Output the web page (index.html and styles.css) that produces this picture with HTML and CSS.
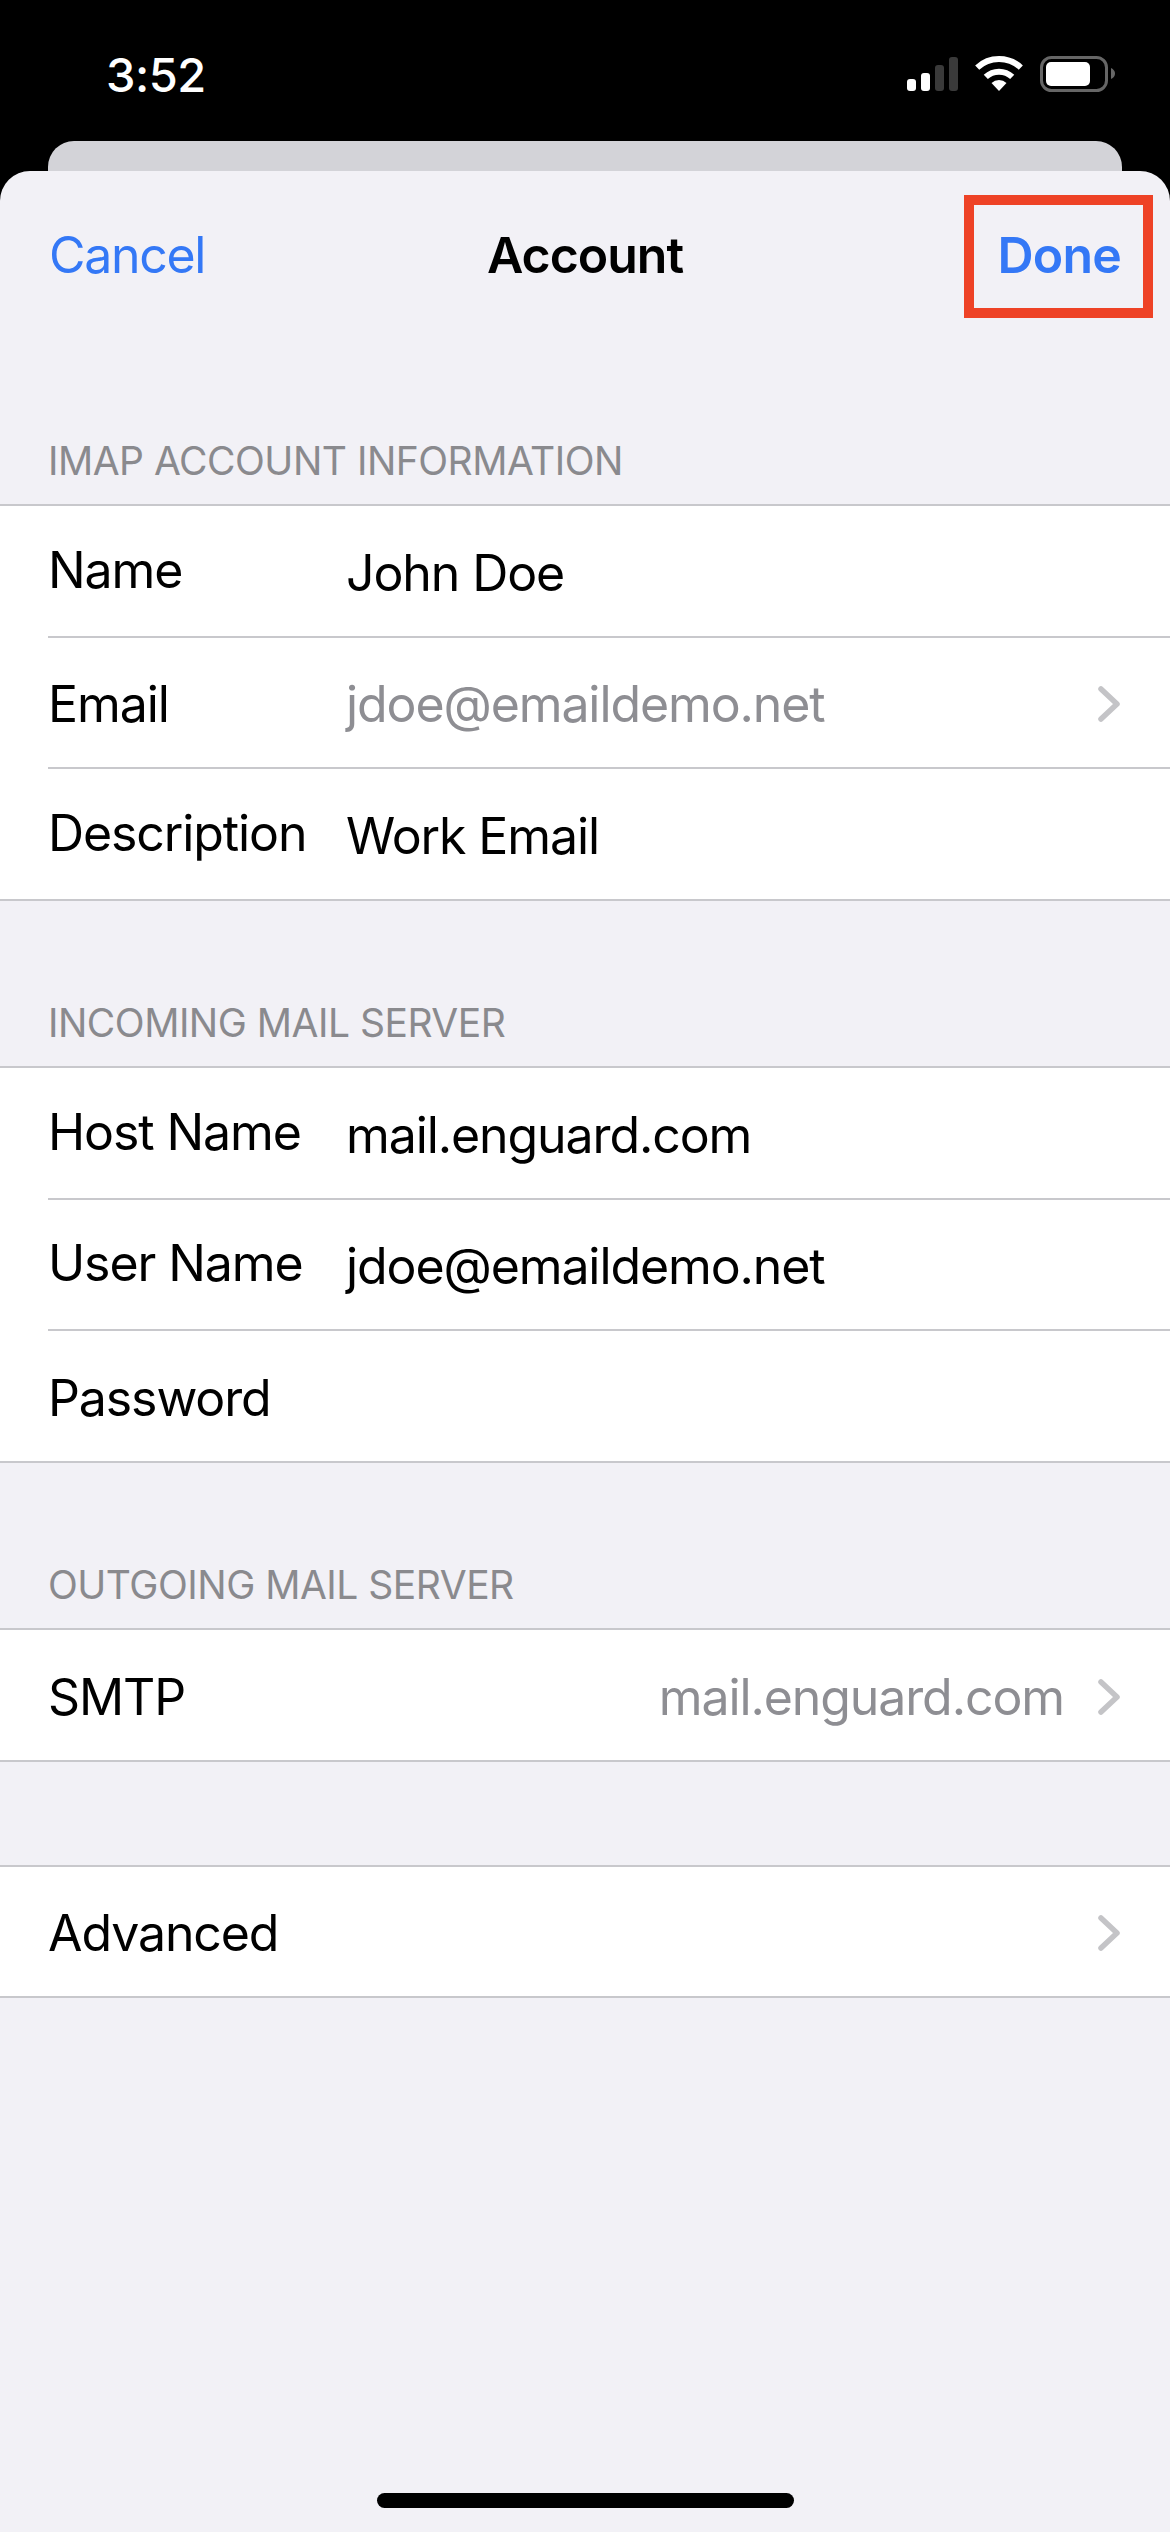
FILE: index.html
```html
<!DOCTYPE html>
<html lang="en">
<head>
    <meta charset="UTF-8">
    <title>Account</title>
    <link rel="stylesheet" href="styles.css">
</head>
<body>
    <!-- status bar -->
    <div class="status">
        <span class="time">3:52</span>
        <div class="status-icons">
            <svg width="51" height="35" viewBox="0 0 51 35">
                <rect x="0" y="23" width="9" height="12" rx="3" fill="#fff"/>
                <rect x="14" y="17" width="9" height="18" rx="3" fill="#fff"/>
                <rect x="28" y="9" width="9" height="26" rx="3" fill="#3a3a3a"/>
                <rect x="42" y="1" width="9" height="34" rx="3" fill="#3a3a3a"/>
            </svg>
            <svg width="48" height="35" viewBox="0 0 48 35">
                <path d="M2.200 11.600 A32 32 0 0 1 45.800 11.600" fill="none" stroke="#fff" stroke-width="6"/>
                <path d="M10.800 20.900 A19.300 19.300 0 0 1 37.200 20.900" fill="none" stroke="#fff" stroke-width="6"/>
                <path d="M24 35 L16.500 27 A11 11 0 0 1 31.500 27 Z" fill="#fff"/>
            </svg>
            <svg width="75" height="36" viewBox="0 0 75 36">
                <rect x="1.500" y="1.500" width="65" height="33" rx="10" fill="none" stroke="#666" stroke-width="3"/>
                <rect x="6" y="6" width="44" height="24" rx="5" fill="#fff"/>
                <path d="M71 12 Q75 14 75 17.500 Q75 21 71 23 Z" fill="#666"/>
            </svg>
        </div>
    </div>

    <div class="peek"></div>

    <!-- sheet -->
    <div class="sheet">
        <div class="nav">
            <span class="nav-btn">Cancel</span>
            <span class="nav-title">Account</span>
            <span class="nav-btn nav-done">Done</span>
            <div class="mark"></div>
        </div>

        <h3 class="section-title section-first">IMAP ACCOUNT INFORMATION</h3>
        <div class="group">
            <div class="row row-field"><span class="label">Name</span><span class="value">John Doe</span></div>
            <div class="row">
                <span class="label">Email</span><span class="value muted">jdoe@emaildemo.net</span>
                <svg class="chevron" width="22" height="36" viewBox="0 0 22 36"><path d="M3 3 L19 18 L3 33" fill="none" stroke="#c4c4c7" stroke-width="5.500" stroke-linecap="round" stroke-linejoin="round"/></svg>
            </div>
            <div class="row row-field"><span class="label">Description</span><span class="value">Work Email</span></div>
        </div>

        <h3 class="section-title">INCOMING MAIL SERVER</h3>
        <div class="group">
            <div class="row row-field"><span class="label">Host Name</span><span class="value">mail.enguard.com</span></div>
            <div class="row row-field"><span class="label">User Name</span><span class="value">jdoe@emaildemo.net</span></div>
            <div class="row"><span class="label">Password</span></div>
        </div>

        <h3 class="section-title">OUTGOING MAIL SERVER</h3>
        <div class="group">
            <div class="row">
                <span class="label">SMTP</span><span class="value muted right">mail.enguard.com</span>
                <svg class="chevron" width="22" height="36" viewBox="0 0 22 36"><path d="M3 3 L19 18 L3 33" fill="none" stroke="#c4c4c7" stroke-width="5.500" stroke-linecap="round" stroke-linejoin="round"/></svg>
            </div>
        </div>

        <div class="group group-alone">
            <div class="row">
                <span class="label">Advanced</span><span class="value"></span>
                <svg class="chevron" width="22" height="36" viewBox="0 0 22 36"><path d="M3 3 L19 18 L3 33" fill="none" stroke="#c4c4c7" stroke-width="5.500" stroke-linecap="round" stroke-linejoin="round"/></svg>
            </div>
        </div>

        <div class="home-wrap"><div class="home-bar"></div></div>
    </div>
</body>
</html>
```

FILE: styles.css
```css
* {
    margin: 0;
    padding: 0;
    box-sizing: border-box;
}

html, body {
    width: 1170px;
    height: 2532px;
    overflow: hidden;
}

body {
    background-color: #000;
    font-family: Inter, "Liberation Sans", sans-serif;
    color: #000;
}

/* status bar */
.status {
    height: 141px;
    padding: 0 55px 0 106px;
    display: flex;
    justify-content: space-between;
    align-items: flex-start;
}

.time {
    margin-top: 50px;
    font-size: 47px;
    line-height: 50px;
    font-weight: 500;
    letter-spacing: -0.5px;
    color: #fff;
}

.status-icons {
    margin-top: 56px;
    display: flex;
    align-items: flex-start;
    gap: 17px;
}

/* card behind the sheet */
.peek {
    height: 30px;
    margin: 0 48px;
    background-color: #d3d3d8;
    border-radius: 26px 26px 0 0;
}

.sheet {
    height: 2361px;
    background-color: #f2f1f6;
    border-radius: 30px 30px 0 0;
    position: relative;
}

.nav {
    height: 164px;
    padding: 3px 49px 0 49px;
    display: grid;
    grid-template-columns: 1fr auto 1fr;
    align-items: center;
    position: relative;
}

.nav-btn {
    font-size: 50px;
    letter-spacing: -1.3px;
    color: #3478f6;
}

.nav-done {
    justify-self: end;
    font-weight: 600;
    letter-spacing: -0.8px;
}

.nav-title {
    font-size: 50px;
    font-weight: 600;
    letter-spacing: -1px;
}

/* red box drawn over the screenshot */
.mark {
    position: absolute;
    left: 964px;
    top: 24px;
    width: 189px;
    height: 123px;
    border: 10px solid #ee4226;
}

.section-title {
    height: 165px;
    padding: 0 48px 20px;
    display: flex;
    align-items: flex-end;
    font-size: 39px;
    font-weight: 400;
    line-height: 46px;
    letter-spacing: -0.5px;
    color: #8a8a8e;
}

.section-first {
    height: 169px;
}

.group {
    background-color: #fff;
    border-top: 2px solid #c8c8cc;
    border-bottom: 2px solid #c8c8cc;
    padding-left: 48px;
}

.group-alone {
    margin-top: 103px;
}

.row {
    height: 131.67px;
    padding: 4px 50px 0 0;
    display: flex;
    align-items: center;
    border-bottom: 2px solid #c8c8cc;
    font-size: 50px;
    letter-spacing: -1.1px;
}

.row:last-child {
    height: 129.67px;
    border-bottom: none;
}

.label {
    width: 298px;
    flex-shrink: 0;
}

/* rows with an input field: label sits a bit higher than the value */
.row-field .label {
    padding-bottom: 6px;
}

.value {
    flex: 1;
}

.muted {
    color: #8e8e93;
}

.right {
    text-align: right;
    padding-right: 34px;
}

.chevron {
    flex-shrink: 0;
}

.home-wrap {
    position: absolute;
    left: 0;
    right: 0;
    bottom: 24px;
    display: flex;
    justify-content: center;
}

.home-bar {
    width: 417px;
    height: 15px;
    border-radius: 8px;
    background-color: #000;
}
```
